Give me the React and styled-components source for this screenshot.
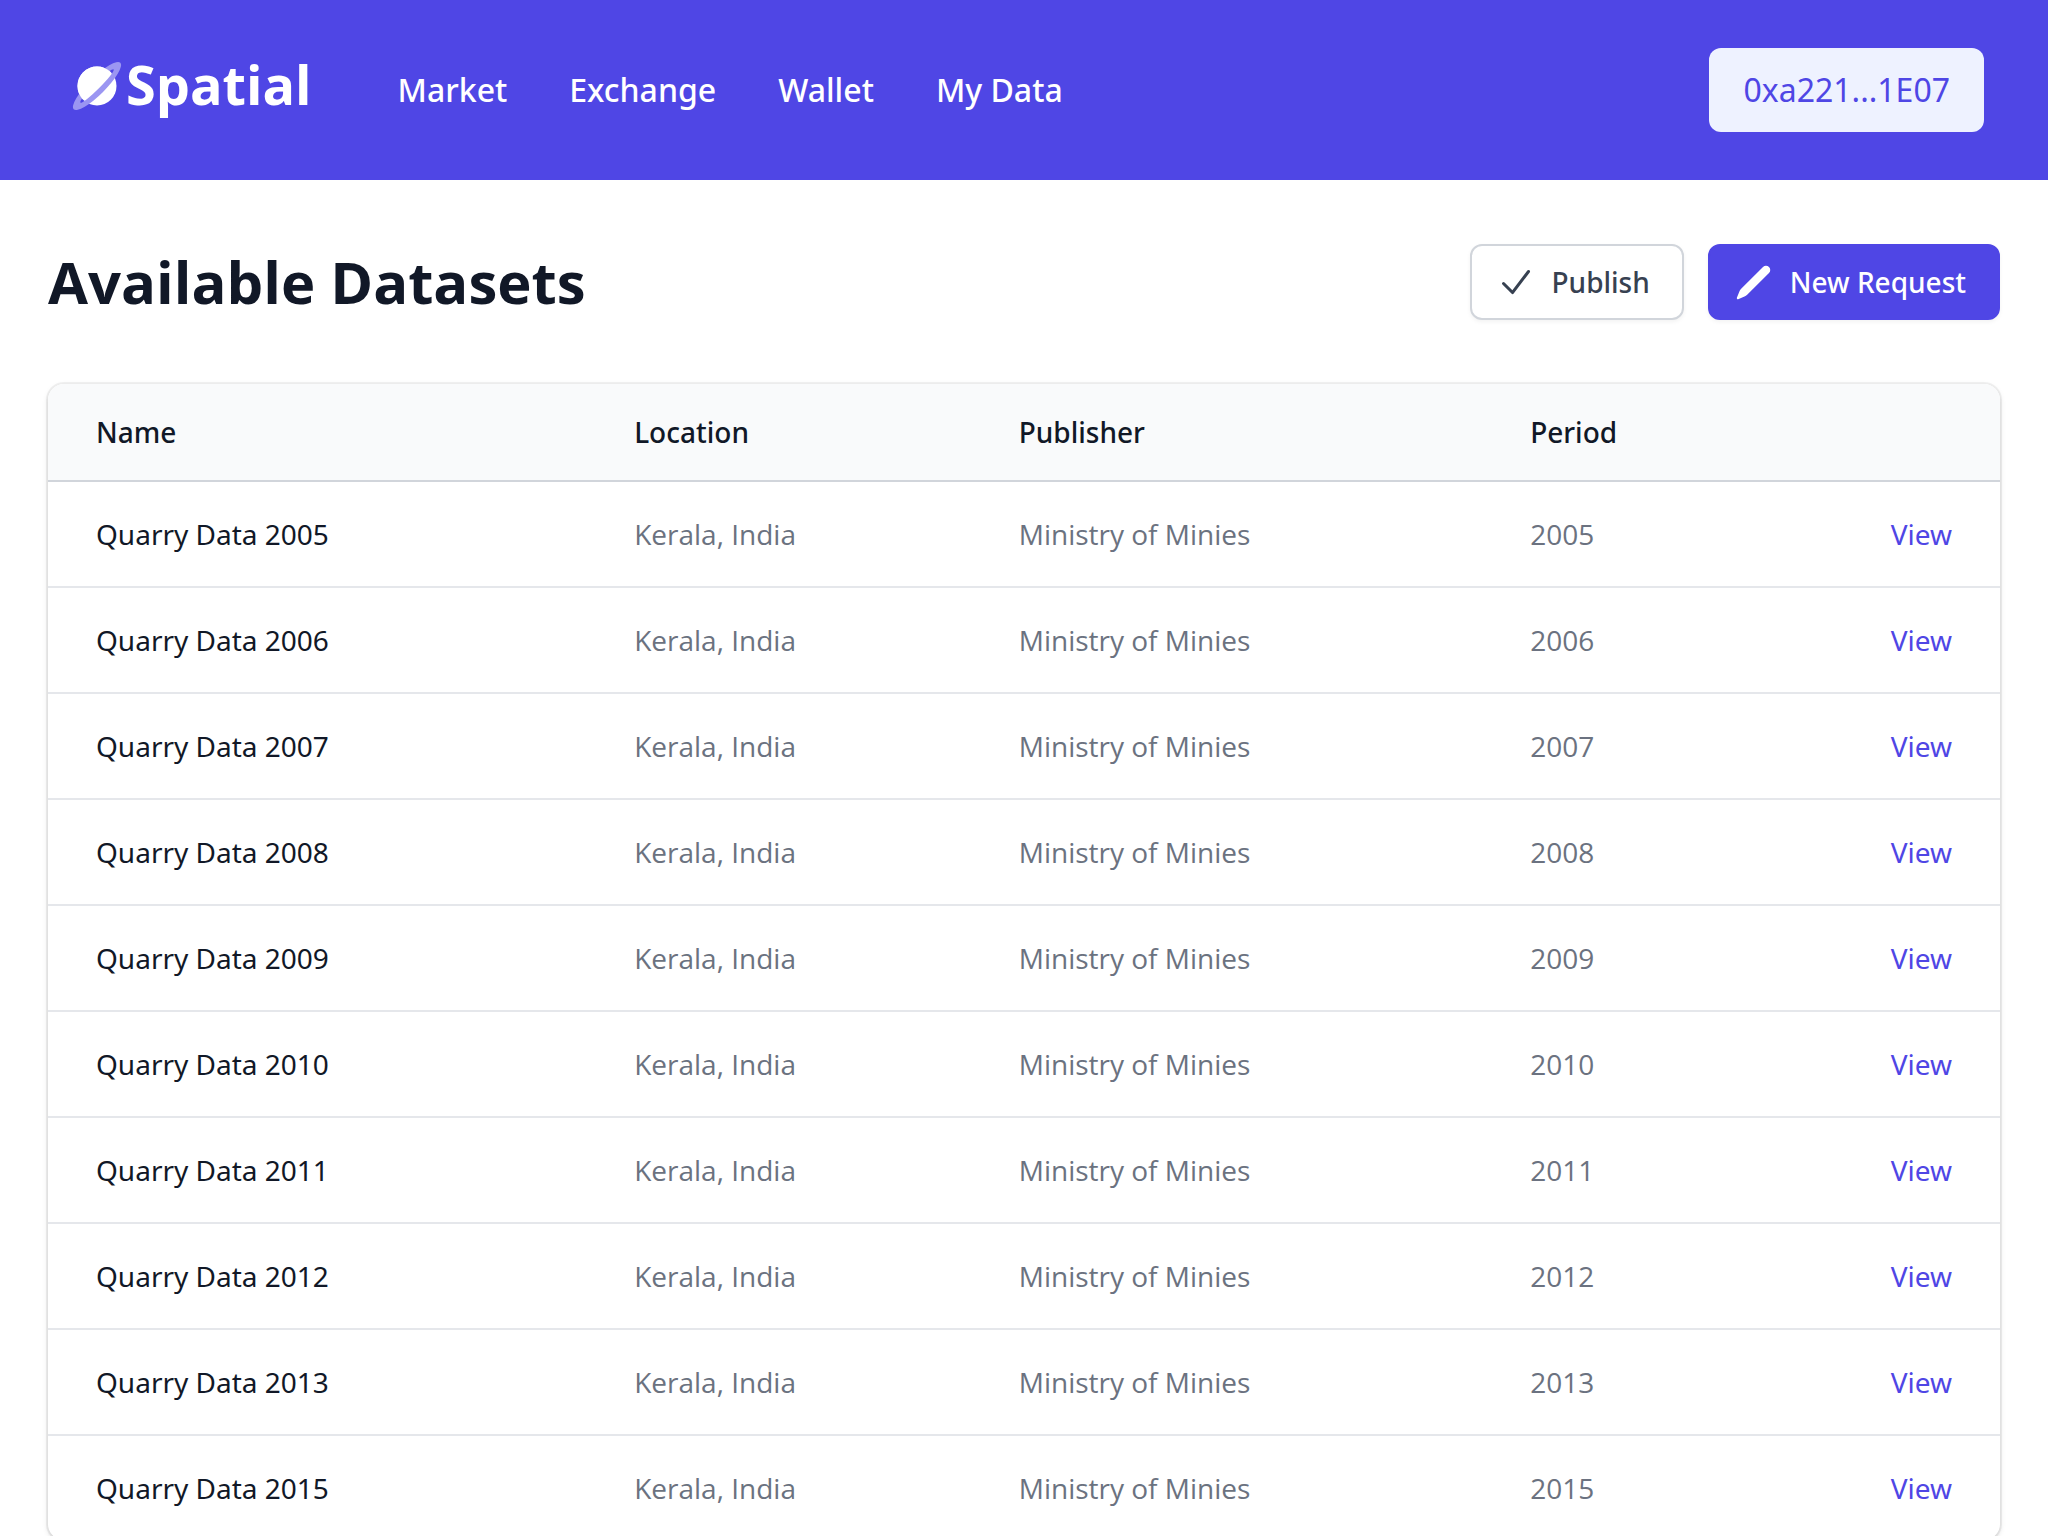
import React from 'react';
import styled, { createGlobalStyle, css, ThemeProvider } from 'styled-components';

const theme = {
  colors: {
    primary: '#4f46e5',
    primaryLight: '#eef2ff',
    white: '#ffffff',
    text: '#111827',
    textButton: '#374151',
    textLight: '#6b7280',
    surface: '#f9fafb',
    border: '#e5e7eb',
    borderStrong: '#d1d5db',
  },
  fonts: {
    body: "'Open Sans', 'Noto Sans', sans-serif",
    strong: "'Noto Sans', 'Open Sans', sans-serif",
  },
};

const GlobalStyle = createGlobalStyle`
  *, *::before, *::after {
    box-sizing: border-box;
  }

  body {
    margin: 0;
    background: ${({ theme }) => theme.colors.white};
    font-family: ${({ theme }) => theme.fonts.body};
    font-size: 28px;
    line-height: 40px;
  }
`;

const Header = styled.header`
  display: flex;
  align-items: center;
  justify-content: space-between;
  padding: 48px 64px;
  background: ${({ theme }) => theme.colors.primary};
`;

const HeaderLeft = styled.div`
  display: flex;
  align-items: center;
  gap: 86px;
`;

const Logo = styled.a`
  display: flex;
  align-items: center;
  gap: 4px;
  padding-left: 8px;
  margin-bottom: 12px;
  color: ${({ theme }) => theme.colors.white};
  font-size: 54px;
  font-weight: 700;
  line-height: 56px;
  text-decoration: none;
`;

const Nav = styled.nav`
  display: flex;
  gap: 62px;
`;

const NavLink = styled.a`
  color: ${({ theme }) => theme.colors.white};
  font-family: ${({ theme }) => theme.fonts.strong};
  font-size: 32px;
  font-weight: 500;
  line-height: 48px;
  text-decoration: none;
`;

const WalletButton = styled.button`
  padding: 18px 34px;
  border: 0;
  border-radius: 12px;
  background: ${({ theme }) => theme.colors.primaryLight};
  color: ${({ theme }) => theme.colors.primary};
  font-family: ${({ theme }) => theme.fonts.strong};
  font-size: 32px;
  line-height: 48px;
  cursor: pointer;
`;

const Main = styled.main`
  padding: 64px 48px;
`;

const TitleRow = styled.div`
  display: flex;
  align-items: center;
  justify-content: space-between;
  margin-bottom: 64px;
`;

const Title = styled.h1`
  margin: 0;
  color: ${({ theme }) => theme.colors.text};
  font-size: 58px;
  font-weight: 700;
  line-height: 72px;
`;

const Actions = styled.div`
  display: flex;
  gap: 24px;
`;

const Button = styled.button`
  display: inline-flex;
  align-items: center;
  gap: 16px;
  padding: 16px 32px 16px 24px;
  border: 2px solid ${({ theme }) => theme.colors.borderStrong};
  border-radius: 12px;
  background: ${({ theme }) => theme.colors.white};
  color: ${({ theme }) => theme.colors.textButton};
  box-shadow: 0 2px 4px rgba(0, 0, 0, 0.05);
  font-family: ${({ theme }) => theme.fonts.strong};
  font-size: 28px;
  font-weight: 500;
  line-height: 40px;
  cursor: pointer;

  ${({ $primary, theme }) =>
    $primary &&
    css`
      border-color: ${theme.colors.primary};
      background: ${theme.colors.primary};
      color: ${theme.colors.white};
    `}
`;

const TableCard = styled.div`
  overflow: hidden;
  border-radius: 16px;
  box-shadow: 0 0 0 2px rgba(0, 0, 0, 0.05), 0 2px 6px rgba(0, 0, 0, 0.1), 0 2px 4px rgba(0, 0, 0, 0.06);
`;

const Table = styled.table`
  width: 100%;
  border-spacing: 0;
`;

const HeadCell = styled.th`
  width: ${({ $width }) => $width};
  padding: 28px 24px;
  border-bottom: 2px solid ${({ theme }) => theme.colors.borderStrong};
  background: ${({ theme }) => theme.colors.surface};
  color: ${({ theme }) => theme.colors.text};
  font-family: ${({ theme }) => theme.fonts.strong};
  font-weight: 500;
  text-align: left;

  &:first-child {
    padding-left: 48px;
  }
`;

const Cell = styled.td`
  padding: 32px 24px;
  border-bottom: 2px solid ${({ theme }) => theme.colors.border};
  color: ${({ theme, $strong }) => ($strong ? theme.colors.text : theme.colors.textLight)};
  font-family: ${({ theme, $strong }) => ($strong ? theme.fonts.strong : theme.fonts.body)};
  white-space: nowrap;

  &:first-child {
    padding-left: 48px;
  }

  &:last-child {
    padding-right: 48px;
    text-align: right;
  }

  tr:last-child > & {
    border-bottom: 0;
  }
`;

const ViewLink = styled.a`
  color: ${({ theme }) => theme.colors.primary};
  text-decoration: none;
`;

const PlanetIcon = () => (
  <svg width="50" height="56" viewBox="0 -4 50 56" fill="none" aria-hidden="true">
    <g transform="rotate(-45 25 26)">
      <circle cx="25" cy="26" r="19.5" fill="#fff" />
      <path
        fill="#9b96f2"
        fillRule="evenodd"
        d="M-8 26a33 8.5 0 1 0 66 0a33 8.5 0 1 0 -66 0ZM1.5 26a23.5 3 0 1 0 47 0a23.5 3 0 1 0 -47 0Z"
      />
      <path d="M5.5 26a19.5 19.5 0 0 1 39 0Z" fill="#fff" />
    </g>
  </svg>
);

const CheckIcon = () => (
  <svg width="40" height="40" viewBox="0 0 20 20" fill="currentColor" aria-hidden="true">
    <path
      fillRule="evenodd"
      clipRule="evenodd"
      d="M16.704 4.153a.75.75 0 01.143 1.052l-8 10.5a.75.75 0 01-1.127.075l-4.5-4.5a.75.75 0 011.06-1.06l3.894 3.893 7.48-9.817a.75.75 0 011.05-.143z"
    />
  </svg>
);

const PencilIcon = () => (
  <svg width="40" height="40" viewBox="0 0 20 20" fill="currentColor" aria-hidden="true">
    <path d="M2.695 14.763l-1.262 3.154a.5.5 0 00.65.65l3.155-1.262a4 4 0 001.343-.885L17.5 5.5a2.121 2.121 0 00-3-3L3.58 13.42a4 4 0 00-.885 1.343z" />
  </svg>
);

const navItems = ['Market', 'Exchange', 'Wallet', 'My Data'];

const columns = [
  { label: 'Name', width: '28.8%' },
  { label: 'Location', width: '19.7%' },
  { label: 'Publisher', width: '26.2%' },
  { label: 'Period', width: '12.7%' },
];

const datasets = [2005, 2006, 2007, 2008, 2009, 2010, 2011, 2012, 2013, 2015].map((year) => ({
  name: `Quarry Data ${year}`,
  location: 'Kerala, India',
  publisher: 'Ministry of Minies',
  period: year,
}));

const App = () => {
  return (
    <ThemeProvider theme={theme}>
      <GlobalStyle />
      <Header>
        <HeaderLeft>
          <Logo href="#">
            <PlanetIcon />
            Spatial
          </Logo>
          <Nav>
            {navItems.map((item) => (
              <NavLink key={item} href="#">
                {item}
              </NavLink>
            ))}
          </Nav>
        </HeaderLeft>
        <WalletButton type="button">0xa221...1E07</WalletButton>
      </Header>

      <Main>
        <TitleRow>
          <Title>Available Datasets</Title>
          <Actions>
            <Button type="button">
              <CheckIcon />
              Publish
            </Button>
            <Button type="button" $primary>
              <PencilIcon />
              New Request
            </Button>
          </Actions>
        </TitleRow>

        <TableCard>
          <Table>
            <thead>
              <tr>
                {columns.map((column) => (
                  <HeadCell key={column.label} scope="col" $width={column.width}>
                    {column.label}
                  </HeadCell>
                ))}
                <HeadCell scope="col" aria-label="Actions" />
              </tr>
            </thead>
            <tbody>
              {datasets.map((dataset) => (
                <tr key={dataset.name}>
                  <Cell $strong>{dataset.name}</Cell>
                  <Cell>{dataset.location}</Cell>
                  <Cell>{dataset.publisher}</Cell>
                  <Cell>{dataset.period}</Cell>
                  <Cell $strong>
                    <ViewLink href="#" aria-label={`View ${dataset.name}`}>
                      View
                    </ViewLink>
                  </Cell>
                </tr>
              ))}
            </tbody>
          </Table>
        </TableCard>
      </Main>
    </ThemeProvider>
  );
};

export default App;
